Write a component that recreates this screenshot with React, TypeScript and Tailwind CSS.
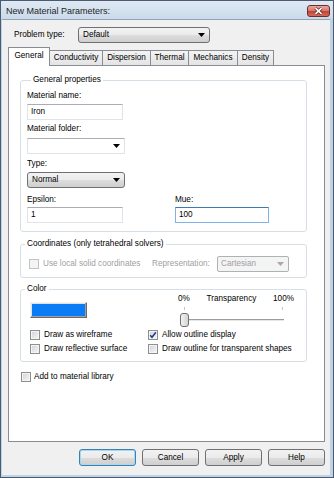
import type { ReactNode } from "react";

const btnFace =
  "bg-[linear-gradient(#f2f2f2_0%,#ebebeb_50%,#dddddd_51%,#cfcfcf_100%)] border border-[#707070] rounded-[3px]";

const Arrow = ({ color = "#000" }: { color?: string }) => (
  <svg width="7" height="4" viewBox="0 0 7 4" className="shrink-0">
    <path d="M0 0h7L3.5 4z" fill={color} />
  </svg>
);

const CheckBox = ({ checked = false, disabled = false }: { checked?: boolean; disabled?: boolean }) => (
  <span
    className={
      disabled
        ? "flex h-[10px] w-[10px] shrink-0 items-center justify-center border border-[#c4c4c4] bg-[#f4f4f4]"
        : "flex h-[10px] w-[10px] shrink-0 items-center justify-center border border-[#8e8f8f] bg-linear-to-br from-[#cfd2d6] to-[#f8f8f8] shadow-[inset_0_0_0_1px_#f4f4f4]"
    }
  >
    {checked && (
      <svg width="8" height="8" viewBox="0 0 8 8">
        <path d="M1.2 4.2 3 6.3 6.9 1.2" fill="none" stroke="#21398c" strokeWidth="1.5" />
      </svg>
    )}
  </span>
);

const Group = ({ title, className, children }: { title: string; className: string; children: ReactNode }) => (
  <div className={`ml-[11px] w-[287px] rounded-[3px] border border-[#d5dfe5] ${className}`}>
    <div className="-mt-[6px] ml-[4px] w-fit bg-white px-[2px] leading-[10px]">{title}</div>
    {children}
  </div>
);

const TextBox = ({ value, className }: { value: string; className: string }) => (
  <div
    className={`flex h-[16px] items-center border border-[#dfe3ea] border-t-[#abadb3] bg-white pl-[3px] ${className}`}
  >
    {value}
  </div>
);

const tabs = [
  { label: "General", width: "w-[42px]" },
  { label: "Conductivity", width: "w-[54px]" },
  { label: "Dispersion", width: "w-[49px]" },
  { label: "Thermal", width: "w-[39px]" },
  { label: "Mechanics", width: "w-[50px]" },
  { label: "Density", width: "w-[37px]" },
];

export default function App() {
  return (
    <div className="flex h-[478px] w-[334px] flex-col border border-[#4b5b6d] bg-[#bed2e8] font-['Liberation_Sans',Arial,sans-serif] text-[8.2px] leading-[10px] text-black">
      {/* title bar */}
      <div className="flex h-[18px] items-center justify-between bg-linear-to-b from-[#dfe9f4] to-[#cbdaea] pl-[5px] pr-[3px] pt-[1px]">
        <span className="text-[9px] text-[#1e1e1e]">New Material Parameters:</span>
        <div className="flex h-[12px] w-[23px] items-center justify-center rounded-[3px] border border-[#6d2f2a] bg-[linear-gradient(#e8a79d_0%,#d77b6e_45%,#c4443a_55%,#d66a58_100%)]">
          <svg width="9" height="8" viewBox="0 0 9 8">
            <path d="M1.5 1.2 7.5 6.8M7.5 1.2 1.5 6.8" stroke="#5b2420" strokeWidth="3" />
            <path d="M1.5 1.2 7.5 6.8M7.5 1.2 1.5 6.8" stroke="#fff" strokeWidth="1.6" />
          </svg>
        </div>
      </div>

      {/* client area */}
      <div className="ml-[1px] mr-[3px] mb-[2px] flex flex-1 flex-col border-t border-[#8fa5bb] bg-[#f0f0f0]">
        <div className="mt-[7px] flex h-[16px] items-center pl-[12px]">
          <span className="w-[64px]">Problem type:</span>
          <div className={`flex h-[16px] w-[132px] items-center justify-between pl-[4px] pr-[4px] ${btnFace}`}>
            <span>Default</span>
            <Arrow />
          </div>
        </div>

        {/* tabs */}
        <div className="mt-[4px] flex h-[18px] items-end pl-[6px]">
          {tabs.map((tab, i) =>
            i === 0 ? (
              <div
                key={tab.label}
                className={`relative z-10 -mb-px flex h-[19px] items-center justify-center border border-b-0 border-[#898c95] bg-white pb-[2px] ${tab.width}`}
              >
                {tab.label}
              </div>
            ) : (
              <div
                key={tab.label}
                className={`-ml-px flex h-[15px] items-center justify-center border border-b-0 border-[#898c95] bg-linear-to-b from-[#f3f3f3] to-[#e4e4e4] ${tab.width}`}
              >
                {tab.label}
              </div>
            )
          )}
        </div>

        {/* tab panel */}
        <div className="ml-[6px] flex h-[377px] w-[317px] flex-col border border-[#898c95] bg-white">
          <Group title="General properties" className="mt-[14px] pb-[8px] pl-[6px]">
            <div className="mt-[6px] -ml-[6px] pl-[6px]">Material name:</div>
            <TextBox value="Iron" className="mt-[3px] w-[96px]" />
            <div className="mt-[4px]">Material folder:</div>
            <div className="mt-[4px] flex h-[16px] w-[98px] items-center justify-end border border-[#dfe3ea] border-t-[#abadb3] bg-white pr-[4px]">
              <Arrow />
            </div>
            <div className="mt-[5px]">Type:</div>
            <div className={`mt-[3px] flex h-[16px] w-[98px] items-center justify-between pl-[4px] pr-[4px] ${btnFace}`}>
              <span>Normal</span>
              <Arrow />
            </div>
            <div className="mt-[7px] flex">
              <div className="w-[148px]">
                <div>Epsilon:</div>
                <TextBox value="1" className="mt-[2px] w-[96px]" />
              </div>
              <div>
                <div>Mue:</div>
                <div className="mt-[2px] flex h-[16px] w-[94px] items-center border border-[#7eb4ea] border-t-[#3d7bad] bg-white pl-[3px]">
                  100
                </div>
              </div>
            </div>
          </Group>

          <Group title="Coordinates (only tetrahedral solvers)" className="mt-[12px] pb-[5px]">
            <div className="mt-[7px] flex h-[16px] items-center pl-[8px] text-[#a0a0a0]">
              <div className="flex w-[123px] items-center gap-[4px]">
                <CheckBox disabled />
                <span>Use local solid coordinates</span>
              </div>
              <span className="w-[65px]">Representation:</span>
              <div className="flex h-[16px] w-[72px] items-center justify-between rounded-[2px] border border-[#adb2b5] bg-[#f4f4f4] pl-[3px] pr-[4px]">
                <span>Cartesian</span>
                <Arrow color="#a8a8a8" />
              </div>
            </div>
          </Group>

          <Group title="Color" className="mt-[11px] pb-[6px]">
            <div className="flex items-start pl-[9px]">
              <div className="mt-[8px] h-[16px] w-[57px] border border-[#f4f4f4] border-r-[#696969] border-b-[#696969] bg-[#0a7cf5] shadow-[inset_-1px_-1px_0_#a0a0a0,inset_1px_1px_0_#e3e3e3]" />
              <div className="ml-[91px] w-[116px]">
                <div className="flex justify-between">
                  <span>0%</span>
                  <span>Transparency</span>
                  <span>100%</span>
                </div>
                <div className="flex h-[9px] items-center pl-[6px]">
                  <span className="h-[3px] w-px bg-[#c4c4c4]" />
                  <span className="ml-[97px] h-[3px] w-px bg-[#c4c4c4]" />
                </div>
                <div className="relative h-[15px]">
                  <div className="absolute left-[6px] right-[10px] top-[6px] h-[2px] border-t border-[#9c9c9c] bg-[#e6e6e6]" />
                  <div className="absolute left-[2px] top-0 h-[14px] w-[9px] rounded-[3px] border border-[#707070] bg-linear-to-r from-[#f2f2f2] to-[#d4d4d4]" />
                </div>
              </div>
            </div>
            <div className="mt-[1px] flex h-[12px] items-center pl-[9px]">
              <div className="flex w-[118px] items-center gap-[4px]">
                <CheckBox />
                <span>Draw as wireframe</span>
              </div>
              <div className="flex items-center gap-[4px]">
                <CheckBox checked />
                <span>Allow outline display</span>
              </div>
            </div>
            <div className="mt-[2px] flex h-[12px] items-center pl-[9px]">
              <div className="flex w-[118px] items-center gap-[4px]">
                <CheckBox />
                <span>Draw reflective surface</span>
              </div>
              <div className="flex items-center gap-[4px]">
                <CheckBox />
                <span>Draw outline for transparent shapes</span>
              </div>
            </div>
          </Group>

          <div className="mt-[9px] ml-[12px] flex h-[12px] items-center gap-[3px]">
            <CheckBox />
            <span>Add to material library</span>
          </div>
        </div>

        {/* buttons */}
        <div className="mt-[7px] flex justify-end gap-[6px] pr-[5px]">
          <div className="flex h-[17px] w-[57px] items-center justify-center rounded-[3px] border border-[#3c7fb1] bg-[linear-gradient(#f2f2f2_0%,#ebebeb_50%,#dddddd_51%,#cfcfcf_100%)] shadow-[inset_0_0_0_1px_#a6d8f4]">
            OK
          </div>
          {["Cancel", "Apply", "Help"].map((label) => (
            <div key={label} className={`flex h-[17px] w-[57px] items-center justify-center ${btnFace}`}>
              {label}
            </div>
          ))}
        </div>
      </div>
    </div>
  );
}
